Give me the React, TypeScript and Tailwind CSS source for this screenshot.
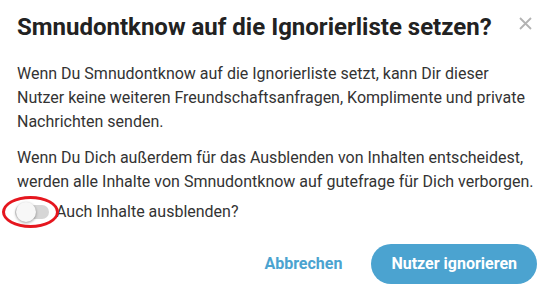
import React, { useState } from "react";

export default function App() {
  const [hide, setHide] = useState(false);

  return (
    <div className="w-[550px] h-[300px] bg-white overflow-hidden font-['Roboto',sans-serif] text-[#333]">
      <div className="pl-[17px] pr-[13px] pt-[11px]">
        {/* Kopfzeile */}
        <div className="flex items-start justify-between">
          <h2 className="text-[24px] leading-[32px] font-bold text-[#222]">
            Smnudontknow auf die Ignorierliste setzen?
          </h2>
          <button className="mt-[6px] mr-[5px] text-[#b3b3b3]">
            <svg width="13" height="13" viewBox="0 0 13 13" fill="none" stroke="currentColor" strokeWidth="1.8">
              <path d="M1 1l11 11M12 1L1 12" />
            </svg>
          </button>
        </div>

        <p className="mt-[19px] text-[16px] leading-[24px]">
          Wenn Du Smnudontknow auf die Ignorierliste setzt, kann Dir dieser
          <br />
          Nutzer keine weiteren Freundschaftsanfragen, Komplimente und private
          <br />
          Nachrichten senden.
        </p>
        <p className="mt-[12px] text-[16px] leading-[24px]">
          Wenn Du Dich außerdem für das Ausblenden von Inhalten entscheidest,
          <br />
          werden alle Inhalte von Smnudontknow auf gutefrage für Dich verborgen.
        </p>

        {/* Schalter */}
        <div className="relative mt-[6px] flex items-center gap-[7px] -ml-[4px]">
          <button
            onClick={() => setHide(!hide)}
            className="relative w-[36px] h-[24px] shrink-0"
          >
            <span className={`absolute left-[2px] top-[5px] w-[34px] h-[14px] rounded-full ${hide ? "bg-[#a6d2ea]" : "bg-[#d6d6d6]"}`} />
            <span
              className={`absolute top-[2px] w-[20px] h-[20px] rounded-full shadow-[0_1px_3px_rgba(0,0,0,0.4)] ${hide ? "left-[16px] bg-[#4ba3d0]" : "left-[3px] bg-[#f7f7f7]"}`}
            />
          </button>
          <span className="text-[16px] leading-[24px]">Auch Inhalte ausblenden?</span>
          {/* rote Markierung */}
          <span className="absolute -left-[11px] -top-[4px] w-[57px] h-[32px] rounded-[50%] border-[3px] border-[#e5161e] pointer-events-none" />
        </div>

        {/* Aktionen */}
        <div className="mt-[20px] flex items-center justify-end gap-[29px]">
          <button className="text-[16px] font-bold text-[#4ba3d0]">Abbrechen</button>
          <button className="h-[40px] px-[20px] rounded-full bg-[#4ba3d0] text-white text-[16px] font-bold">
            Nutzer ignorieren
          </button>
        </div>
      </div>
    </div>
  );
}
